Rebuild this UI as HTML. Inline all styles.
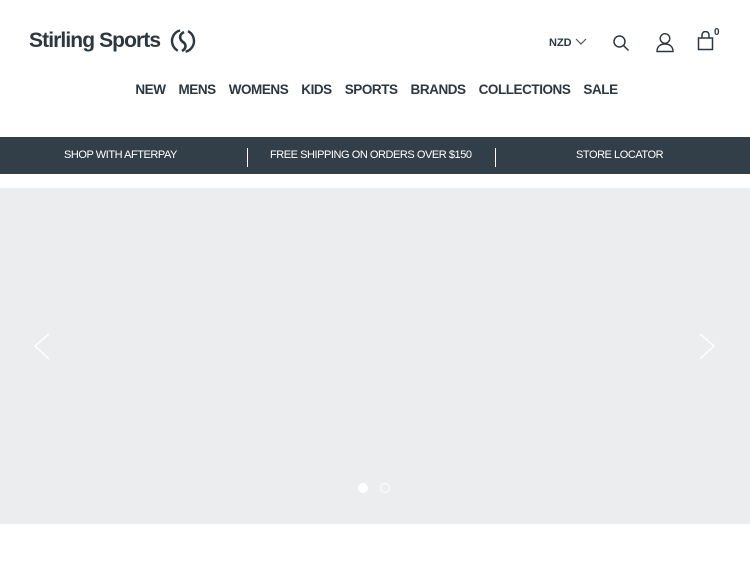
<!DOCTYPE html>
<html><head><style>
*{margin:0;padding:0;box-sizing:border-box}
body{width:750px;height:563px;background:#fff;font-family:"Liberation Sans",sans-serif;position:relative;overflow:hidden;color:#2d3740}
.abs{position:absolute}
.logo{left:29px;top:29px;font-size:21px;color:#2d3740;letter-spacing:-0.9px;font-weight:bold;white-space:nowrap}
.nav{top:82px;left:0;width:750px;text-align:center;font-size:13.5px;font-weight:bold;letter-spacing:-0.45px;color:#2d3740;padding-left:3px}
.nav span{margin:0 6.5px}
.bar{top:137px;left:0;width:750px;height:37px;background:#333f48;color:#fff;font-size:11px;letter-spacing:-0.45px;white-space:nowrap}
.bar div{position:absolute;top:12px}
.sep{position:absolute;top:11px;width:1px;height:19px;background:#fff}
.hero{top:188px;left:0;width:750px;height:336px;background:#ecedef}
</style></head><body>
<div class="abs logo">Stirling Sports</div>
<svg class="abs" style="left:169px;top:28px" width="28" height="26" viewBox="0 0 28 26"><circle cx="14" cy="13" r="11" fill="none" stroke="#2d3740" stroke-width="2.4" stroke-dasharray="26 8" transform="rotate(-60 14 13)"/><path d="M15 4 C9 7 11 12 14 14 C17 16 18 20 13 23" fill="none" stroke="#2d3740" stroke-width="2.6"/></svg>
<div class="abs" style="left:549px;top:37px;font-size:11px;font-weight:bold">NZD</div>
<svg class="abs" style="left:575px;top:38px" width="12" height="8"><path d="M1 1 L6 6 L11 1" fill="none" stroke="#555" stroke-width="1.2"/></svg>
<svg class="abs" style="left:612px;top:34px" width="18" height="18"><circle cx="7.5" cy="7.5" r="5.5" fill="none" stroke="#2d3740" stroke-width="1.5"/><path d="M11.5 11.5 L16.5 16.5" stroke="#2d3740" stroke-width="1.5"/></svg>
<svg class="abs" style="left:655px;top:32px" width="20" height="21"><circle cx="10" cy="6.5" r="4.8" fill="none" stroke="#2d3740" stroke-width="1.4"/><path d="M2 19.5 C2 14 6 12 10 12 C14 12 18 14 18 19.5 Z" fill="none" stroke="#2d3740" stroke-width="1.4"/></svg>
<svg class="abs" style="left:697px;top:31px" width="18" height="20"><path d="M1.5 7 H15.5 V18.5 H1.5 Z" fill="none" stroke="#2d3740" stroke-width="1.5"/><path d="M5 7 V4 A3.5 3.5 0 0 1 12 4 V7" fill="none" stroke="#2d3740" stroke-width="1.5"/></svg>
<div class="abs" style="left:714px;top:27px;font-size:10px;font-weight:bold">0</div>
<div class="abs nav"><span>NEW</span><span>MENS</span><span>WOMENS</span><span>KIDS</span><span>SPORTS</span><span>BRANDS</span><span>COLLECTIONS</span><span>SALE</span></div>
<div class="abs bar">
<div style="left:64px">SHOP WITH AFTERPAY</div>
<span class="sep" style="left:247px"></span>
<div style="left:270px">FREE SHIPPING ON ORDERS OVER $150</div>
<span class="sep" style="left:495px"></span>
<div style="left:576px">STORE LOCATOR</div>
</div>
<div class="abs hero"></div>
<svg class="abs" style="left:32px;top:332px" width="20" height="30"><path d="M17 2 L3 14 L17 27" fill="none" stroke="#fff" stroke-width="1.5"/></svg>
<svg class="abs" style="left:697px;top:332px" width="20" height="30"><path d="M3 2 L17 14 L3 27" fill="none" stroke="#fff" stroke-width="1.5"/></svg>
<div class="abs" style="left:358px;top:483px;width:10px;height:10px;border-radius:50%;background:#fff"></div>
<div class="abs" style="left:380px;top:483px;width:10px;height:10px;border-radius:50%;border:1px solid #fff"></div>
</body></html>
